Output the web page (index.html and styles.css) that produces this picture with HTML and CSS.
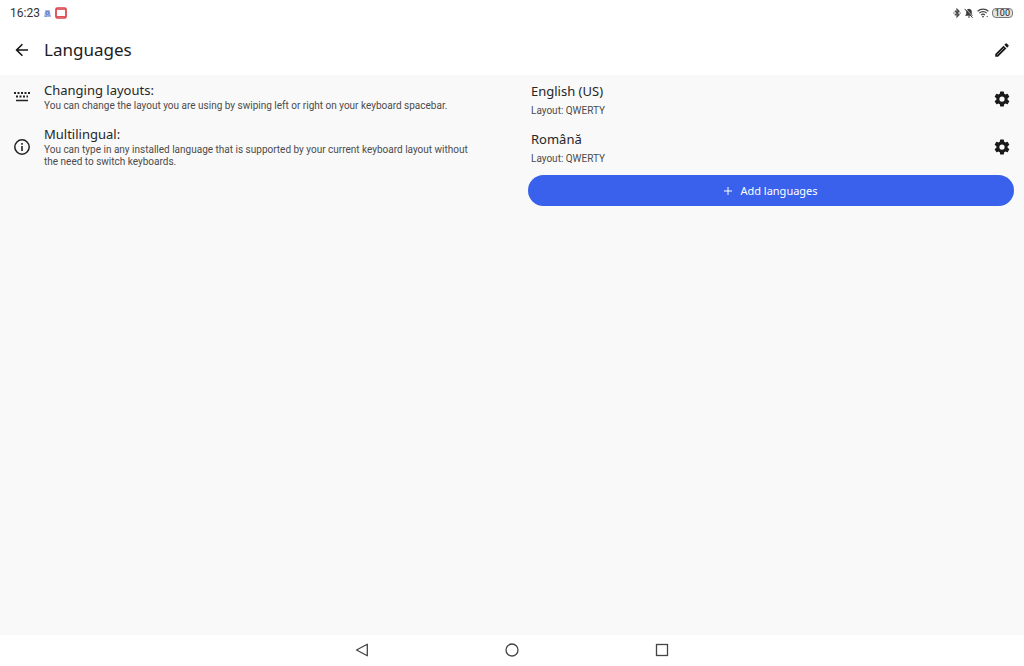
FILE: index.html
```
<!DOCTYPE html>
<html lang="en">
<head>
<meta charset="utf-8">
<meta name="viewport" content="width=device-width, initial-scale=1">
<title>Languages</title>
<link rel="stylesheet" href="styles.css">
</head>
<body>
<div class="status">
  <span class="clock">16:23</span>
  <svg class="note-icon" viewBox="0 0 8 8" aria-hidden="true"><path d="M1.300 0h5.400l1.100 8H.2z" fill="#a9bbe6"/><circle cx="4" cy="3.400" r="1.800" fill="none" stroke="#4468bd"/><path d="M.5 7h3M5 6.500h2.500" stroke="#6d8ad0"/></svg>
  <svg class="app-icon" viewBox="0 0 12 12" aria-hidden="true"><rect x="1" y="1" width="10" height="10" rx="1.500" fill="#fff" stroke="#dc3f45" stroke-width="1.700"/><path d="M2 2.300h8M2 9.600h8" stroke="#dc3f45"/></svg>
  <span class="tray">
    <svg class="bt" viewBox="0 0 8 10" aria-hidden="true"><path d="M1.800 2.800l4.200 4L4 8.800V1.200l2 2-4.200 4M.3 5h1.200M6.500 5h1.200" fill="none" stroke="#444" stroke-width="1.200"/></svg>
    <svg class="bell" viewBox="0 0 10 10" aria-hidden="true"><path d="M5 .8c2 .3 2.800 1.600 2.800 3.200v2L9 7.800H1L2.200 6V4C2.200 2.400 3 1.100 5 .8zM4 8.400h2v1H4z" fill="#3c3c3c"/><path d="M1.400.3l8 9" stroke="#fff" stroke-width=".7"/><path d="M.6.8l8 9" stroke="#3c3c3c"/></svg>
    <svg class="wifi" viewBox="0 0 12 10" aria-hidden="true"><path d="M.6 3.300c3-2.800 7.800-2.800 10.800 0M2.300 5.200c2-2 5.400-2 7.400 0M4.100 7c1-1 2.800-1 3.800 0" fill="none" stroke="#444" stroke-width="1.200"/><circle cx="6" cy="8.600" r=".9" fill="#444"/><path d="M9.500 8.500h1.500" stroke="#777"/></svg>
    <span class="battery">100</span>
  </span>
</div>
<header class="bar">
  <button class="icon-btn" aria-label="Back"><svg class="back" viewBox="0 0 14 14"><path d="M7.400 1.200L1.600 7l5.800 5.800M1.800 7H13" fill="none" stroke="#161616" stroke-width="1.600"/></svg></button>
  <h1>Languages</h1>
  <button class="icon-btn edit" aria-label="Edit"><svg class="glyph" viewBox="0 0 24 24"><path d="M3 17.250V21h3.750L17.810 9.940l-3.750-3.750L3 17.250zM20.710 7.040a1 1 0 0 0 0-1.410l-2.340-2.340a1 1 0 0 0-1.410 0l-1.830 1.830 3.750 3.750 1.830-1.830z" fill="#1a1a1a"/><path d="M5.500 18.500l9-9" stroke="#999" stroke-width="1.300"/></svg></button>
</header>
<main class="content">
  <section class="tips">
    <article class="tip">
      <svg class="keys" viewBox="0 0 16 10" aria-hidden="true"><path d="M0 1h16M2 4.500h12" stroke="#222" stroke-width="2" stroke-dasharray="2 1.500"/><path d="M2 8.500h12" stroke="#222" stroke-width="1.500"/></svg>
      <div><h2>Changing layouts:</h2><p>You can change the layout you are using by swiping left or right on your keyboard spacebar.</p></div>
    </article>
    <article class="tip">
      <svg class="info" viewBox="0 0 16 16" aria-hidden="true"><circle cx="8" cy="8" r="7.200" fill="none" stroke="#222" stroke-width="1.500"/><path d="M8 7v5M8 4v1.700" stroke="#222" stroke-width="1.600"/></svg>
      <div><h2>Multilingual:</h2><p>You can type in any installed language that is supported by your current keyboard layout without the need to switch keyboards.</p></div>
    </article>
  </section>
  <section class="languages">
    <div class="lang">
      <div><h2>English (US)</h2><p>Layout: QWERTY</p></div>
      <button class="icon-btn" aria-label="English (US) settings"><svg class="glyph" viewBox="0 0 24 24"><use href="#gear"/></svg></button>
    </div>
    <div class="lang">
      <div><h2>Română</h2><p>Layout: QWERTY</p></div>
      <button class="icon-btn" aria-label="Română settings"><svg class="glyph" viewBox="0 0 24 24"><path id="gear" fill="#1a1a1a" d="M19.430 12.980c.04-.32.07-.64.07-.98s-.03-.66-.07-.98l2.110-1.650a.5.5 0 0 0 .12-.64l-2-3.460a.5.5 0 0 0-.61-.22l-2.490 1a7.300 7.300 0 0 0-1.690-.98l-.38-2.650A.49.49 0 0 0 14 2h-4a.49.49 0 0 0-.49.420l-.38 2.650c-.61.25-1.170.59-1.690.98l-2.490-1a.5.5 0 0 0-.61.220l-2 3.460a.5.5 0 0 0 .12.640l2.110 1.650a8 8 0 0 0 0 1.960l-2.110 1.650a.5.5 0 0 0-.12.640l2 3.460c.12.220.39.300.61.220l2.490-1c.52.400 1.080.730 1.690.980l.38 2.650c.03.240.24.420.49.420h4c.25 0 .46-.18.49-.42l.38-2.650c.61-.25 1.170-.59 1.690-.98l2.490 1c.23.090.49 0 .61-.22l2-3.460a.5.500 0 0 0-.12-.64l-2.110-1.650zM12 15.500a3.500 3.500 0 1 1 0-7 3.500 3.500 0 0 1 0 7z"/></svg></button>
    </div>
    <button class="add"><svg class="plus" viewBox="0 0 8 8" aria-hidden="true"><path d="M4 0v8M0 4h8" stroke="#fff"/></svg>Add languages</button>
  </section>
</main>
<nav class="nav">
  <button class="icon-btn" aria-label="Back"><svg class="sys" viewBox="0 0 14 14"><path d="M12.300 1.200v11.600L1.500 7z" fill="none" stroke="#444" stroke-width="1.300" stroke-linejoin="round"/></svg></button>
  <button class="icon-btn" aria-label="Home"><svg class="sys" viewBox="0 0 14 14"><circle cx="7" cy="7" r="6" fill="none" stroke="#444" stroke-width="1.300"/></svg></button>
  <button class="icon-btn" aria-label="Recent apps"><svg class="sys" viewBox="0 0 14 14"><rect x="1.500" y="1.500" width="11" height="11" fill="none" stroke="#444" stroke-width="1.300"/></svg></button>
</nav>
</body>
</html>
```
FILE: styles.css
```
* { box-sizing: border-box; }
body {
  margin: 0;
  min-height: 100vh;
  display: flex;
  flex-direction: column;
  background: #fff;
  color: #262626;
  font-family: "Noto Sans", "Open Sans", sans-serif;
}
h1, h2, p { margin: 0; font-weight: 400; }
svg { display: block; flex: none; }
button { border: 0; padding: 0; font: inherit; cursor: pointer; }

.status {
  display: flex;
  align-items: center;
  height: 26px;
  padding: 0 11px 0 10px;
}
.clock { font-family: Roboto, sans-serif; font-size: 12px; color: #333; }
.note-icon { width: 7px; height: 7px; margin-left: 4px; }
.app-icon { width: 12px; height: 12px; margin-left: 4px; }
.tray { display: flex; align-items: center; gap: 3px; margin-left: auto; }
.bt { width: 8px; height: 10px; }
.bell { width: 10px; height: 10px; }
.wifi { width: 12px; height: 10px; }
.battery {
  padding: 0 2px;
  border: 1px solid #777;
  border-radius: 4px;
  background: #e4e4e4;
  color: #222;
  font-family: Roboto, sans-serif;
  font-size: 9px;
  line-height: 8px;
}

.icon-btn {
  display: grid;
  place-items: center;
  flex: none;
  width: 24px;
  height: 24px;
  background: none;
}
.bar {
  display: flex;
  align-items: center;
  gap: 10px;
  height: 49px;
  padding: 0 10px 2px;
}
.bar h1 { flex: 1; font-size: 17px; line-height: 24px; color: #1c1c1c; }
.back { width: 14px; height: 14px; }
.glyph { width: 18px; height: 18px; }

.content {
  flex: 1;
  display: grid;
  grid-template-columns: 1fr 1fr;
  align-items: start;
  padding: 0 10px;
  background: #f9f9f9;
}
h2 { font-size: 13px; line-height: 18px; }
p { font-family: Roboto, sans-serif; font-size: 10px; line-height: 12px; color: #4c4c4c; }
.tips { display: grid; gap: 13px; padding: 6px 32px 0 0; }
.tip { display: grid; grid-template-columns: 24px 1fr; column-gap: 10px; align-items: center; }
.tip svg { justify-self: center; }
.tip p { margin-top: 1px; }
.keys { width: 16px; height: 10px; }
.info { width: 16px; height: 16px; }
.languages { padding-left: 16px; }
.lang { display: flex; justify-content: space-between; align-items: center; height: 48px; padding-left: 3px; }
.lang p { margin-top: 5px; }
.add {
  display: flex;
  justify-content: center;
  align-items: center;
  gap: 8px;
  width: 100%;
  height: 31px;
  margin-top: 4px;
  border-radius: 16px;
  background: #3961ec;
  color: #fff;
  font-size: 11px;
}
.plus { width: 8px; height: 8px; }

.nav { display: flex; justify-content: center; align-items: center; gap: 126px; height: 31px; padding-bottom: 1px; }
.sys { width: 14px; height: 14px; }
```
